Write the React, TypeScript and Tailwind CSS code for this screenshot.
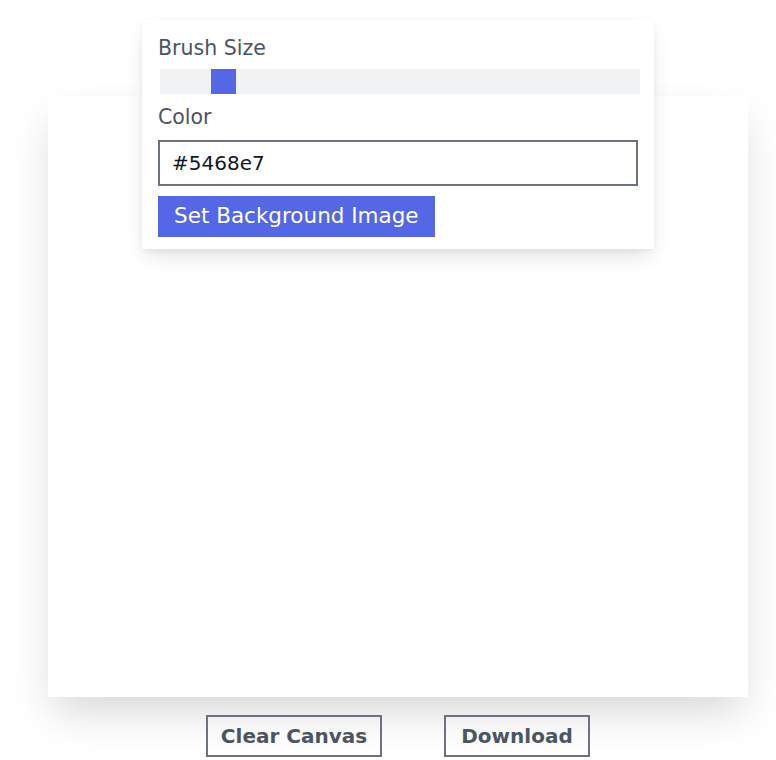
const font = { fontFamily: '"DejaVu Sans", sans-serif' };

function ToolPanel() {
  return (
    <div className="absolute left-[142px] top-[20px] w-[512px] bg-white px-4 pt-[13px] pb-3 shadow-[0_10px_20px_-4px_rgba(0,0,0,0.12),0_2px_6px_rgba(0,0,0,0.05)]">
      <label className="block text-[20.5px] leading-[30px] text-[#4b5563]">Brush Size</label>
      <div className="ml-[2px] mt-[6px] h-[25px] w-[480px] bg-[#f1f2f4]">
        <div className="ml-[51px] h-[25px] w-[25px] bg-[#5468e7]" />
      </div>
      <label className="mt-[8px] block text-[20.5px] leading-[30px] text-[#4b5563]">Color</label>
      <input
        readOnly
        value="#5468e7"
        className="mt-[8px] block h-[46px] w-[480px] border-2 border-[#6b7280] px-[12px] text-[20px] text-[#111827] outline-none"
        style={font}
      />
      <button className="mt-[10px] block h-[41px] bg-[#5468e7] px-4 text-[21.5px] text-white" style={font}>
        Set Background Image
      </button>
    </div>
  );
}

export default function App() {
  return (
    <div className="relative w-[796px] bg-white pb-[3px]" style={font}>
      <div className="flex flex-col items-center">
        <div className="mt-[96px] h-[601px] w-[700px] bg-white shadow-[0_20px_40px_-6px_rgba(0,0,0,0.16)]" />
        <div className="mt-[18px] flex gap-[62px]">
          <button className="h-[42px] w-[176px] border-2 border-[#6b7280] text-[20px] font-bold text-[#4b5563]">
            Clear Canvas
          </button>
          <button className="h-[42px] w-[146px] border-2 border-[#6b7280] text-[20px] font-bold text-[#4b5563]">
            Download
          </button>
        </div>
      </div>
      <ToolPanel />
    </div>
  );
}
